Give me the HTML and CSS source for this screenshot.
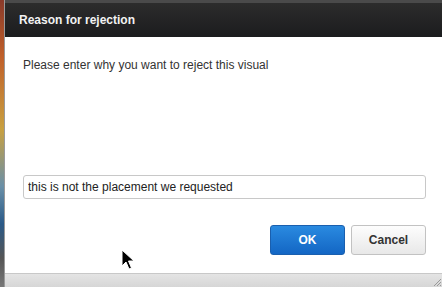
FILE: index.html
```html
<!DOCTYPE html>
<html lang="en">
<head>
    <meta charset="UTF-8">
    <meta name="viewport" content="width=device-width, initial-scale=1.0">
    <title>Reason for rejection</title>
    <link rel="stylesheet" href="styles.css">
</head>
<body>
    <div class="screen">
        <div class="backdrop"></div>
        <div class="dialog">
            <div class="dialog-title">Reason for rejection</div>
            <div class="dialog-body">
                <div class="prompt">Please enter why you want to reject this visual</div>
                <input class="reason" type="text" value="this is not the placement we requested">
                <div class="actions">
                    <button class="btn btn-primary">OK</button>
                    <button class="btn btn-default">Cancel</button>
                </div>
            </div>
            <div class="dialog-footer">
                <svg class="grip" width="10" height="10" viewBox="0 0 10 10">
                    <path d="M9 2 L2 9 M9 5 L5 9 M9 8 L8 9" stroke="#999" stroke-width="1"/>
                </svg>
            </div>
        </div>
    </div>

    <!-- mouse pointer -->
    <svg class="cursor" width="14" height="22" viewBox="0 0 14 22">
        <path d="M1 1 L1 17 L5 13 L8 20 L10.5 19 L7.5 12 L13 12 Z" fill="#000" stroke="#fff" stroke-width="1"/>
    </svg>
</body>
</html>
```

FILE: styles.css
```css
body {
    margin: 0;
    font-family: "Liberation Sans", Arial, sans-serif;
    background-color: #fff;
}
.screen {
    display: flex;
    height: 287px;
    overflow: hidden;
}
.backdrop {
    width: 4px;
    flex-shrink: 0;
    background: linear-gradient(#8a3a2a 0%, #c0602a 20%, #c8a040 45%, #6a90a8 65%, #2a5a88 78%, #555 90%, #777 100%);
    border-right: 1px solid #9a9a9a;
}
.dialog {
    flex: 1;
    display: flex;
    flex-direction: column;
    background-color: #fff;
}
.dialog-title {
    height: 34px;
    border-top: 3px solid #4a4a4a;
    background: linear-gradient(#2c2c2c, #1b1c1e);
    color: #f2f2f2;
    font-size: 12px;
    font-weight: bold;
    line-height: 34px;
    padding-left: 14px;
}
.dialog-body {
    flex: 1;
    display: flex;
    flex-direction: column;
    padding: 21px 16px 0 18px;
}
.prompt {
    font-size: 12px;
    line-height: 14px;
    color: #333;
}
.reason {
    margin-top: 103px;
    height: 24px;
    box-sizing: border-box;
    border: 1px solid #c8c8c8;
    border-radius: 3px;
    padding: 0 4px;
    font-family: "Liberation Sans", Arial, sans-serif;
    font-size: 12px;
    color: #222;
    outline: none;
}
.actions {
    display: flex;
    justify-content: flex-end;
    gap: 6px;
    margin-top: 26px;
}
.btn {
    width: 75px;
    height: 30px;
    border-radius: 3px;
    font-family: "Liberation Sans", Arial, sans-serif;
    font-size: 12px;
    font-weight: bold;
    padding: 0;
}
.btn-primary {
    background: linear-gradient(#2a8ae0, #1366c4);
    border: 1px solid #1a5fae;
    color: #fff;
}
.btn-default {
    background: linear-gradient(#fdfdfd, #e8e8e8);
    border: 1px solid #c2c2c2;
    color: #333;
}
.dialog-footer {
    height: 13px;
    border-top: 1px solid #c8c8c8;
    background: linear-gradient(#e4e4e4, #d6d6d6);
    display: flex;
    justify-content: flex-end;
    align-items: flex-end;
}
.grip {
    display: block;
}
.cursor {
    position: absolute;
    left: 121px;
    top: 249px;
}
```
